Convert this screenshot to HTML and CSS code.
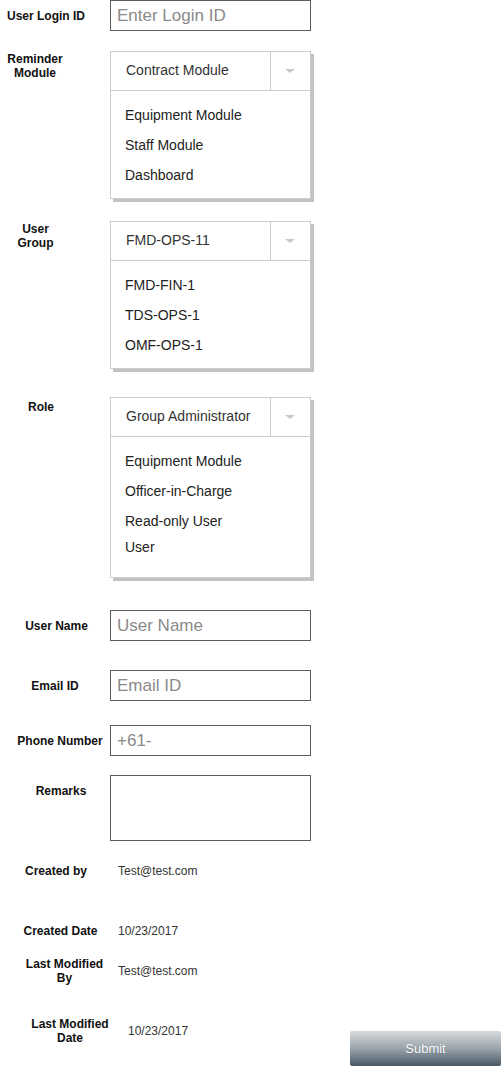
FILE: index.html
```html
<!DOCTYPE html>
<html lang="en">
<head>
<meta charset="utf-8">
<title>User Form</title>
<link rel="stylesheet" href="styles.css">
</head>
<body>
<div class="form">
  <div class="row row-login">
    <div class="label lbl-login">User Login ID</div>
    <div class="input"><span class="ph">Enter Login ID</span></div>
  </div>

  <div class="row row-top row-reminder">
    <div class="label lbl-reminder">Reminder<br>Module</div>
    <div class="dd">
      <div class="dd-head"><span class="dd-value">Contract Module</span><span class="dd-btn"><span class="tri"></span></span></div>
      <div class="dd-list">
        <div class="opt">Equipment Module</div>
        <div class="opt">Staff Module</div>
        <div class="opt">Dashboard</div>
      </div>
    </div>
  </div>

  <div class="row row-top row-group">
    <div class="label lbl-group">User<br>Group</div>
    <div class="dd">
      <div class="dd-head"><span class="dd-value">FMD-OPS-11</span><span class="dd-btn"><span class="tri"></span></span></div>
      <div class="dd-list">
        <div class="opt">FMD-FIN-1</div>
        <div class="opt">TDS-OPS-1</div>
        <div class="opt">OMF-OPS-1</div>
      </div>
    </div>
  </div>

  <div class="row row-top row-role">
    <div class="label lbl-role">Role</div>
    <div class="dd">
      <div class="dd-head"><span class="dd-value">Group Administrator</span><span class="dd-btn"><span class="tri"></span></span></div>
      <div class="dd-list dd-list-role">
        <div class="opt">Equipment Module</div>
        <div class="opt">Officer-in-Charge</div>
        <div class="opt">Read-only User</div>
        <div class="opt opt-tight">User</div>
      </div>
    </div>
  </div>

  <div class="row row-username">
    <div class="label lbl-username">User Name</div>
    <div class="input"><span class="ph">User Name</span></div>
  </div>

  <div class="row row-email">
    <div class="label lbl-email">Email ID</div>
    <div class="input"><span class="ph">Email ID</span></div>
  </div>

  <div class="row row-phone">
    <div class="label lbl-phone">Phone Number</div>
    <div class="input"><span class="ph">+61-</span></div>
  </div>

  <div class="row row-top row-remarks">
    <div class="label lbl-remarks">Remarks</div>
    <div class="textarea"></div>
  </div>

  <div class="row row-createdby">
    <div class="label lbl-createdby">Created by</div>
    <div class="value">Test@test.com</div>
  </div>

  <div class="row row-createddate">
    <div class="label lbl-createddate">Created Date</div>
    <div class="value">10/23/2017</div>
  </div>

  <div class="row row-lmby">
    <div class="label lbl-lmby">Last Modified<br>By</div>
    <div class="value">Test@test.com</div>
  </div>

  <div class="row row-top row-lmdate">
    <div class="label lbl-lmdate">Last Modified<br>Date</div>
    <div class="value value-lmdate">10/23/2017</div>
    <button class="submit" type="button">Submit</button>
  </div>
</div>
</body>
</html>
```

FILE: styles.css
```css
html, body {
  margin: 0;
  padding: 0;
  background: #ffffff;
}

body {
  font-family: "Liberation Sans", Arial, sans-serif;
  color: #111111;
  width: 501px;
  height: 1066px;
  overflow: hidden;
}

.form {
  display: flex;
  flex-direction: column;
}

.row {
  display: flex;
  align-items: center;
}

.row-top {
  align-items: flex-start;
}

.label {
  width: 110px;
  flex: 0 0 110px;
  box-sizing: border-box;
  text-align: center;
  font-size: 12px;
  font-weight: bold;
  line-height: 14px;
  white-space: nowrap;
  color: #111111;
}

/* label placements */
.lbl-login { padding-right: 18px; }
.lbl-reminder { padding-right: 40px; margin-top: 1px; }
.lbl-group { padding-right: 39px; margin-top: 1px; }
.lbl-role { padding-right: 28px; margin-top: 3px; }
.lbl-username { padding-left: 3px; }
.lbl-email { padding-left: 0; }
.lbl-phone { padding-left: 10px; }
.lbl-remarks { padding-left: 12px; margin-top: 9px; }
.lbl-createdby { padding-left: 2px; }
.lbl-createddate { padding-left: 11px; }
.lbl-lmby { padding-left: 19px; }
.lbl-lmdate { padding-left: 30px; }

/* row vertical spacing */
.row-reminder { margin-top: 20px; }
.row-group { margin-top: 22px; }
.row-role { margin-top: 28px; }
.row-username { margin-top: 32px; }
.row-email { margin-top: 29px; }
.row-phone { margin-top: 24px; }
.row-remarks { margin-top: 19px; }
.row-createdby { margin-top: 23px; }
.row-createddate { margin-top: 46px; }
.row-lmby { margin-top: 19px; }
.row-lmdate { margin-top: 32px; }

/* text inputs */
.input {
  width: 201px;
  height: 31px;
  box-sizing: border-box;
  border: 1px solid #5c5c5c;
  padding-left: 6px;
  font-size: 17px;
  line-height: 29px;
  color: #8a8a8a;
  white-space: nowrap;
  overflow: hidden;
}

.textarea {
  width: 201px;
  height: 66px;
  box-sizing: border-box;
  border: 1px solid #5c5c5c;
}

/* dropdowns */
.dd {
  width: 201px;
  box-sizing: border-box;
  border: 1px solid #cdcdcd;
  box-shadow: 3px 3px 0 #c2c2c2;
  background: #ffffff;
}

.dd-head {
  display: flex;
  height: 38px;
  border-bottom: 1px solid #cdcdcd;
}

.dd-value {
  flex: 1;
  padding-left: 15px;
  font-size: 14px;
  line-height: 37px;
  color: #333333;
  white-space: nowrap;
}

.dd-btn {
  width: 40px;
  flex: 0 0 40px;
  box-sizing: border-box;
  border-left: 1px solid #cdcdcd;
  display: flex;
  align-items: center;
  justify-content: center;
}

.tri {
  width: 0;
  height: 0;
  border-left: 5px solid transparent;
  border-right: 5px solid transparent;
  border-top: 4px solid #c8c8c8;
  margin-right: 2px;
}

.dd-list {
  padding: 9px 0 8px 14px;
}

.dd-list-role {
  padding-bottom: 15px;
}

.opt {
  font-size: 14px;
  line-height: 30px;
  color: #222222;
  white-space: nowrap;
}

.opt-tight {
  margin-top: -4px;
}

/* read-only values */
.value {
  padding-left: 8px;
  font-size: 12px;
  line-height: 14px;
  color: #333333;
  white-space: nowrap;
}

.value-lmdate {
  padding-left: 18px;
  margin-top: 7px;
}

/* submit button */
.submit {
  margin-left: auto;
  margin-top: 14px;
  width: 151px;
  height: 35px;
  border: none;
  border-radius: 2px;
  background: linear-gradient(to bottom, #d6dadd 0%, #9aa4ab 50%, #485864 100%);
  color: #ffffff;
  font-family: "Liberation Sans", Arial, sans-serif;
  font-size: 13px;
  padding: 0;
  text-shadow: 0 0 1px rgba(0, 0, 0, 0.35);
  cursor: pointer;
}
```
